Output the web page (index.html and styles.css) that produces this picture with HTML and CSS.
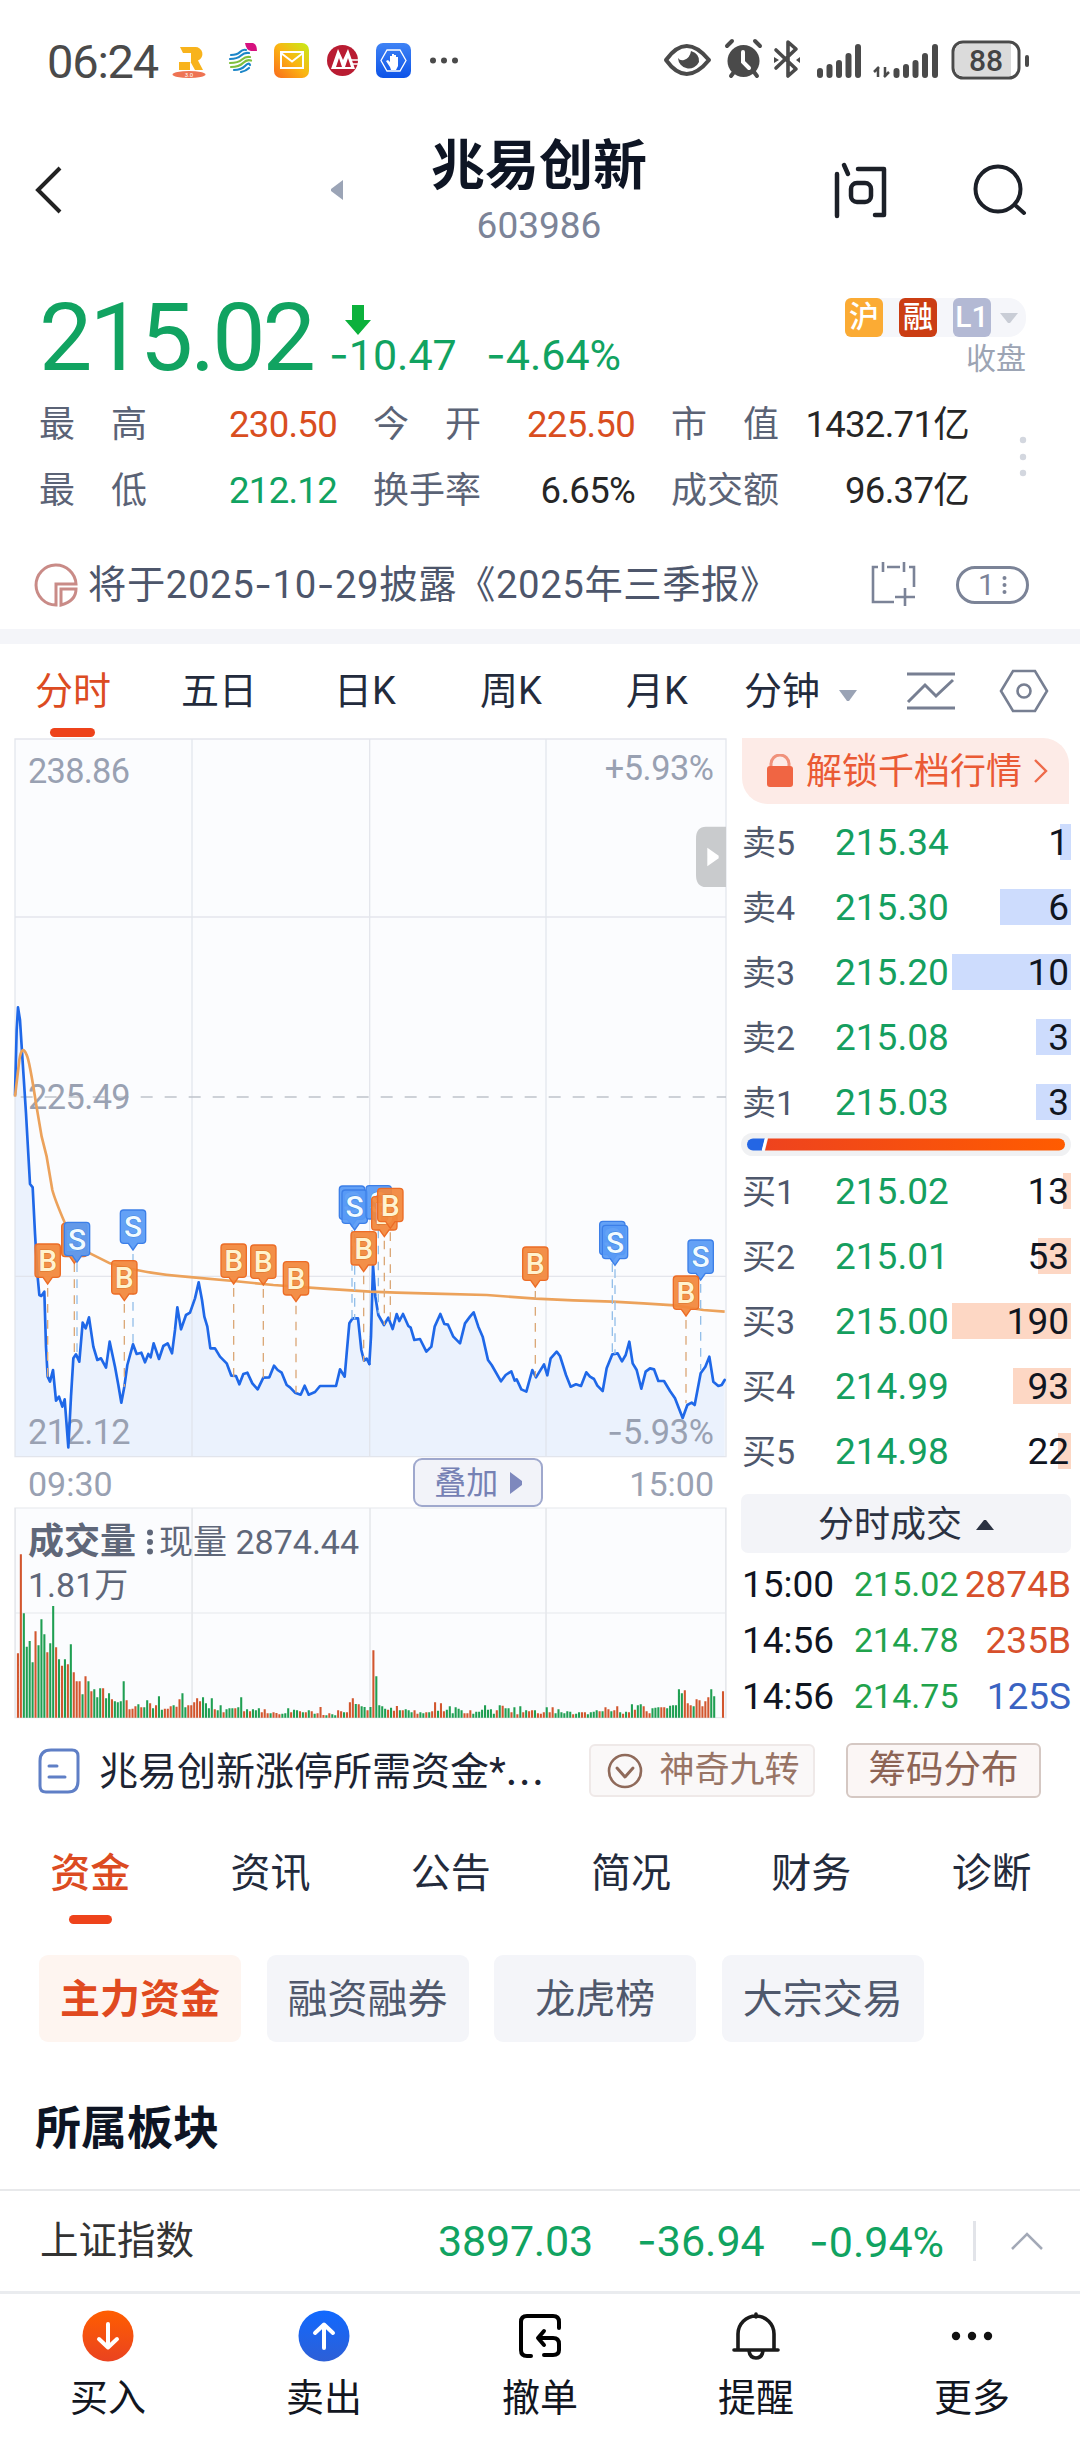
FILE: index.html
```html
<!DOCTYPE html>
<html lang="zh-CN">
<head>
<meta charset="utf-8">
<title>兆易创新 603986</title>
<link rel="stylesheet" href="styles.css">
</head>
<body>
<div class="statusbar">
  <span class="clock">06:24</span>
  <svg class="apps" width="290" height="40" viewBox="0 0 290 40">
    <defs>
      <linearGradient id="mail" x1="0" y1="1" x2="1" y2="0"><stop offset="0" stop-color="#f96a1c"/><stop offset=".5" stop-color="#fbb413"/><stop offset="1" stop-color="#c4ee18"/></linearGradient>
      <linearGradient id="hand" x1="0" y1="0" x2="0" y2="1"><stop offset="0" stop-color="#3f83f5"/><stop offset="1" stop-color="#0c53e8"/></linearGradient>
    </defs>
    <path d="M9 6h15a7 7 0 0 1 3 13.500l5 9.500h-8l-5-9v9h-7v-11h8v-6h-8z" fill="#f8b31c"/>
    <path d="M10 15h7v3h3v3h-12v-3h2z" fill="#fff"/><path d="M8 21h6v8h-6z" fill="#f8b31c"/>
    <ellipse cx="18" cy="33.500" rx="16.500" ry="3.500" fill="#ee7353"/>
    <text x="18" y="36" font-size="6" fill="#fff" text-anchor="middle">3.0</text>
    <g fill="none" stroke-width="2.200" stroke-linecap="round"><path d="M60 14q6 0 9-3t6-2M59 18q7 0 11-3.500t8-2.500" stroke="#1c86c8"/><path d="M59 22q8 0 12-3.500t8-2.500M60 26q8 0 12-4t8-2.500" stroke="#7fbf3d"/><path d="M63 29q7 0 11-4t5-1M70 31q5-1 8-4" stroke="#1c86c8"/></g>
    <path d="M74 2h8q4 1 4 8h-6q-5-1-6-8z" fill="#d6117f"/>
    <rect x="103" y="2" width="35" height="35" rx="7" fill="url(#mail)"/>
    <path d="M110 11h22v16h-22zM110 12l11 8.500l11-8.500" fill="none" stroke="#fff" stroke-width="2"/>
    <circle cx="171.500" cy="19.500" r="15.500" fill="#b91c32"/>
    <path d="M160 28l7-20l5 11l5-11l7 20z" fill="#fff"/><path d="M165 26l3-9l3 9zM174 26l3-9l3 9z" fill="#b91c32"/><path d="M179 19h8M181 23h6" stroke="#fff" stroke-width="1.500"/>
    <rect x="205" y="2" width="35" height="35" rx="7" fill="url(#hand)"/>
    <path d="M216 9h13l6 10.500l-6 10.500h-13l-6-10.500z" fill="none" stroke="#fff" stroke-width="1.300"/>
    <path d="M219 26l-4-6l2-1l2 2v-6h2v-2h2v1h2v2h2v9l-2 4h-5z" fill="#fff"/>
    <g fill="#4a4a4a"><circle cx="262" cy="19.500" r="3"/><circle cx="273" cy="19.500" r="3"/><circle cx="284" cy="19.500" r="3"/></g>
  </svg>
  <svg class="signals" width="370" height="46" viewBox="0 0 370 46">
    <g fill="none" stroke="#4a4a4a" stroke-width="4" stroke-linejoin="round" stroke-linecap="round">
      <path d="M3 23q20-28 43 0q-23 28-43 0z"/>
      <path d="M64 9l5-5M92 4l5 5M68 39l3-4M94 39l-3-4"/>
      <path d="M113 13l20 19l-8 7v-34l8 7l-20 19" stroke-width="3.600"/>
    </g>
    <path d="M28 14q9 3 8 11a11 11 0 0 1-21-4q2 3 6 2q6-2 7-9z" fill="#4a4a4a"/>
    <circle cx="80.500" cy="24" r="16" fill="#4a4a4a"/><path d="M80 15v10l6 6" stroke="#fff" stroke-width="4" fill="none" stroke-linecap="round"/>
    <path d="M111 20l5 3l-5 3zM137 20l-4 3l4 3z" fill="#4a4a4a"/>
    <g stroke="#4a4a4a" stroke-width="6" stroke-linecap="round"><path d="M157 34v4M166.500 30v8M176 26v12M185.500 19v19M195 10v28M233.500 34v4M243 30v8M252.500 26v12M262 19v19M272 10v28"/></g>
    <path d="M215 40v-10M216 30l-5 5M222 30v10M221 40l5-5" stroke="#4a4a4a" stroke-width="2.500" fill="none"/>
    <rect x="290" y="5" width="66" height="36" rx="10" fill="#fff" stroke="#4a4a4a" stroke-width="3"/>
    <path d="M300 7h48v32h-48q-8 0-8-8v-16q0-8 8-8z" fill="#dbdbdb"/>
    <path d="M364 20v8" stroke="#4a4a4a" stroke-width="4" stroke-linecap="round"/>
    <text x="323" y="33.500" font-size="30" text-anchor="middle" font-weight="500" fill="#444">88</text>
  </svg>
</div>

<header class="header">
  <svg class="back" width="30" height="50" viewBox="0 0 30 50"><path d="M26 3L4 25l22 22" fill="none" stroke="#222" stroke-width="4"/></svg>
  <svg class="prev" width="12" height="20" viewBox="0 0 12 20"><path d="M12 0v20L0 11v-2z" fill="#9ba4b6"/></svg>
  <div class="names"><h1>兆易创新</h1><span class="code">603986</span></div>
  <svg class="ask" width="56" height="60" viewBox="0 0 56 60"><g fill="none" stroke="#1c2028" stroke-width="4.500" stroke-linecap="round" stroke-linejoin="round"><path d="M5 14v42M12 5l4 9M26 9h26v46h-9"/><rect x="19" y="23" width="20" height="19" rx="6"/></g></svg>
  <svg class="search" width="56" height="54" viewBox="0 0 56 54"><g fill="none" stroke="#1c2028" stroke-width="4" stroke-linecap="round"><circle cx="25" cy="26" r="22.500"/><path d="M42 42l9 8"/></g></svg>
</header>

<section class="quote">
  <span class="price">215.02</span>
  <div class="change">
    <svg width="26" height="32" viewBox="0 0 26 32"><path d="M7 2h12v15h7L13 32L0 17h7z" fill="#0cb13c"/></svg>
    <div class="delta"><span class="d1"><i>-</i>10.47</span><span class="d2"><i>-</i>4.64%</span></div>
  </div>
  <div class="tags">
    <div class="taglist"><b class="hu">沪</b><b class="rong">融</b><b class="lv">L1</b><svg width="18" height="10" viewBox="0 0 18 10"><path d="M0 0h18L10 10H8z" fill="#c9cdd6"/></svg></div>
    <span class="closed">收盘</span>
  </div>
</section>

<section class="stats">
  <dl>
    <dt>最<s></s>高</dt><dd class="up">230.50</dd><dt>今<s></s>开</dt><dd class="up">225.50</dd><dt>市<s></s>值</dt><dd>1432.71亿</dd>
    <dt>最<s></s>低</dt><dd class="down">212.12</dd><dt>换手率</dt><dd>6.65%</dd><dt>成交额</dt><dd>96.37亿</dd>
  </dl>
  <svg width="8" height="44" viewBox="0 0 8 44"><g fill="#d3d7df"><circle cx="4" cy="5" r="3.200"/><circle cx="4" cy="22" r="3.200"/><circle cx="4" cy="38" r="3.200"/></g></svg>
</section>

<section class="notice">
  <svg width="44" height="46" viewBox="0 0 44 46"><g fill="none" stroke="#c98b87" stroke-width="3"><path d="M22 43A20 20 0 1 1 42 22H22z"/><path d="M27 27h15q0 12-15 16z"/></g></svg>
  <p>将于2025<i>-</i>10<i>-</i>29披露《2025年三季报》</p>
  <svg class="cal" width="46" height="48" viewBox="0 0 46 48"><g fill="none" stroke="#7b8397" stroke-width="2.600"><path d="M7 6H2v35h21M16 6h13M38 6h5v20M12 1v10M33 1v10M34 27v18M24 36h20"/></g></svg>
  <span class="count">1<svg width="5" height="22" viewBox="0 0 5 22"><g fill="#7b8397"><circle cx="2.500" cy="4" r="2"/><circle cx="2.500" cy="11" r="2"/><circle cx="2.500" cy="18" r="2"/></g></svg></span>
</section>

<nav class="periods">
  <span class="on">分时</span><span>五日</span><span>日K</span><span>周K</span><span>月K</span><span class="min">分钟<svg width="18" height="11" viewBox="0 0 18 11"><path d="M0 0h18L10 11H8z" fill="#9aa3b5"/></svg></span>
  <svg class="trend" width="50" height="40" viewBox="0 0 50 40"><path d="M1 3h48M1 37h48M2 31L19 14L30 25L47 9" fill="none" stroke="#777f92" stroke-width="3"/></svg>
  <svg class="hex" width="50" height="44" viewBox="0 0 50 44"><g fill="none" stroke="#777f92" stroke-width="2.600"><path d="M14 2h22l12 20l-12 20h-22L2 22z"/><circle cx="25" cy="22" r="6.500"/></g></svg>
</nav>

<main class="board">
  <div class="charts">
    <svg class="kline" width="740" height="720" viewBox="0 -726 2220 2160">
      <defs>
        <g id="mb"><path d="M-28 0h56q10 0 10 10v80q0 10-10 10h-14l-14 20l-14-20h-14q-10 0-10-10v-80q0-10 10-10z" fill="#f2863a" fill-opacity=".93" stroke="#ec6c26" stroke-width="4"/><text x="0" y="82" text-anchor="middle" font-size="90" font-weight="500" fill="#fff3cf" stroke="#d9742a" stroke-width="3" paint-order="stroke">B</text></g>
        <g id="ms"><path d="M-28 0h56q10 0 10 10v80q0 10-10 10h-14l-14 20l-14-20h-14q-10 0-10-10v-80q0-10 10-10z" fill="#579af5" fill-opacity=".93" stroke="#3c7fe8" stroke-width="4"/><text x="0" y="82" text-anchor="middle" font-size="90" font-weight="500" fill="#f2fbff" stroke="#3f86dd" stroke-width="3" paint-order="stroke">S</text></g>
      </defs>
      <path d="M45-723H2178V1430H45z" fill="#fbfcfe"/>
      <path d="M45 345L50 150L54 82L60 120L66 215L78 400L90 612L98 622L105 760L112 880L118 945L124 948L133 935L138 1100L143 1190L150 1205L159 1170L168 1262L177 1250L187 1280L194 1258L205 1402L213 1250L220 1135L228 1123L238 1145L248 1028L257 1045L267 1012L280 1100L292 1140L303 1135L318 1163L329 1085L345 1160L355 1215L364 1268L373 1220L382 1155L399 1093L410 1122L424 1118L435 1147L445 1122L452 1132L461 1090L477 1137L490 1098L503 1090L516 1120L525 1050L532 982L543 1048L558 1005L570 998L585 955L596 907L606 960L613 1010L622 1040L631 1105L645 1105L660 1130L680 1150L694 1187L708 1188L718 1213L730 1182L742 1178L757 1210L773 1228L790 1193L808 1192L822 1157L833 1170L845 1178L860 1215L870 1222L885 1238L902 1244L914 1217L926 1244L945 1236L960 1218L1008 1218L1020 1168L1034 1190L1040 1120L1048 1030L1058 1015L1074 1015L1084 1110L1092 1142L1100 1136L1108 1152V1430H45z" fill="#ebf2fd"/>
      <path transform="translate(1080 510)" d="M28 642L33 560L39 345L46 440L55 495L72 525L85 503L98 537L110 492L118 513L129 492L145 528L152 533L163 570L180 567L199 605L214 590L224 530L241 492L253 522L264 524L280 560L300 580L315 520L330 500L341 487L355 530L368 560L384 630L395 645L423 694L437 675L454 664L464 692L470 688L484 718L499 725L517 660L528 682L552 643L562 676L572 625L590 605L600 618L618 675L632 710L648 703L663 708L679 667L690 680L702 687L712 707L728 723L740 655L757 613L773 610L786 634L797 615L808 575L818 640L830 660L844 716L857 665L870 655L882 658L895 693L912 693L930 723L945 745L968 804L982 765L995 758L1004 765L1022 670L1036 650L1048 620L1060 695L1075 708L1085 705L1094 690V920H28z" fill="#ebf2fd"/>
      <path d="M45-723H2178V1430H45zM576-723V1430M1109-723V1430M1638-723V1430M45-189H2178M45 889H2178" fill="none" stroke="#dfe2e9" stroke-opacity=".85" stroke-width="4"/>
      <path d="M62 351H2178" stroke="#bfc2ca" stroke-width="5" stroke-dasharray="36 36"/>
      <g class="axis">
        <text x="84" y="-591" textLength="306">238.86</text><text x="84" y="387" textLength="308">225.49</text><text x="84" y="1391" textLength="308">212.12</text>
        <text x="1814" y="-600" textLength="328">+5.93%</text>
      </g>
      <g fill="none" stroke="#1f68e8" stroke-width="8" stroke-linejoin="round" stroke-linecap="round">
        <path d="M45 345L50 150L54 82L60 120L66 215L78 400L90 612L98 622L105 760L112 880L118 945L124 948L133 935L138 1100L143 1190L150 1205L159 1170L168 1262L177 1250L187 1280L194 1258L205 1402L213 1250L220 1135L228 1123L238 1145L248 1028L257 1045L267 1012L280 1100L292 1140L303 1135L318 1163L329 1085L345 1160L355 1215L364 1268L373 1220L382 1155L399 1093L410 1122L424 1118L435 1147L445 1122L452 1132L461 1090L477 1137L490 1098L503 1090L516 1120L525 1050L532 982L543 1048L558 1005L570 998L585 955L596 907L606 960L613 1010L622 1040L631 1105L645 1105L660 1130L680 1150L694 1187L708 1188L718 1213L730 1182L742 1178L757 1210L773 1228L790 1193L808 1192L822 1157L833 1170L845 1178L860 1215L870 1222L885 1238L902 1244L914 1217L926 1244L945 1236L960 1218L1008 1218L1020 1168L1034 1190L1040 1120L1048 1030L1058 1015L1074 1015L1084 1110L1092 1142L1100 1136L1108 1152"/>
        <path transform="translate(1080 510)" d="M28 642L33 560L39 345L46 440L55 495L72 525L85 503L98 537L110 492L118 513L129 492L145 528L152 533L163 570L180 567L199 605L214 590L224 530L241 492L253 522L264 524L280 560L300 580L315 520L330 500L341 487L355 530L368 560L384 630L395 645L423 694L437 675L454 664L464 692L470 688L484 718L499 725L517 660L528 682L552 643L562 676L572 625L590 605L600 618L618 675L632 710L648 703L663 708L679 667L690 680L702 687L712 707L728 723L740 655L757 613L773 610L786 634L797 615L808 575L818 640L830 660L844 716L857 665L870 655L882 658L895 693L912 693L930 723L945 745L968 804L982 765L995 758L1004 765L1022 670L1036 650L1048 620L1060 695L1075 708L1085 705L1094 690"/>
      </g>
      <path d="M45 350L58 240Q66 190 80 225Q88 240 108 370L125 470L140 530L157 630Q165 660 195 730Q215 795 270 820L330 850Q370 864 410 870Q480 885 580 892L700 903L820 915L960 925L1110 935L1190 938L1300 941L1460 945L1607 956L1720 961L1837 965L1930 970L2025 976L2110 990L2174 995" fill="none" stroke="#eca25b" stroke-width="8" stroke-linejoin="round"/>
      <g fill="none" stroke="#dba878" stroke-width="4" stroke-dasharray="26 22"><path d="M143 924V1190M223 850V1130M373 972V1220M701 924V1190M790 927V1195M888 977V1238M1091 887V1145M1153 782V1035M1171 757V1020M1606 933V1190M2058 1020V1270"/></g>
      <g fill="none" stroke="#94bfe9" stroke-width="4" stroke-dasharray="26 22"><path d="M231 850V1120M399 822V1093M1056 750V1018M1064 762V1018M1135 749V1000M1837 850V1120M1845 868V1122M2102 912V1170"/></g>
      <use href="#mb" x="143" y="792"/><use href="#mb" x="223" y="730"/><use href="#ms" x="231" y="727"/><use href="#mb" x="373" y="842"/><use href="#ms" x="399" y="690"/>
      <use href="#mb" x="701" y="792"/><use href="#mb" x="790" y="795"/><use href="#mb" x="888" y="845"/>
      <use href="#ms" x="1056" y="618"/><use href="#ms" x="1064" y="630"/><use href="#ms" x="1136" y="617"/><use href="#mb" x="1153" y="650"/><use href="#mb" x="1171" y="625"/><use href="#mb" x="1091" y="755"/>
      <use href="#mb" x="1606" y="801"/><use href="#ms" x="1837" y="724"/><use href="#ms" x="1845" y="736"/><use href="#ms" x="2102" y="780"/><use href="#mb" x="2058" y="888"/>
      <g class="axis"><text x="1822" y="1391" textLength="320"><tspan class="dash">-</tspan>5.93%</text></g>
      <path d="M2178-460H2118q-30 0-30 36v108q0 37 30 37h60z" fill="#c9cbcd"/><path d="M2122-397l34 24v8l-34 24z" fill="#fff"/>
    </svg>
    <div class="times"><span>09:30</span><span class="overlay">叠加<svg width="12" height="22" viewBox="0 0 12 22"><path d="M0 0L12 9v4L0 22z" fill="#7e88bd"/></svg></span><span>15:00</span></div>
    <div class="volume">
      <svg id="vol" width="740" height="212" viewBox="0 171 1568 636" preserveAspectRatio="none">
        <path d="M32 174H1538V803H32z" fill="#fbfcfe"/>
        <path d="M32 174H1538V803H32zM407 174V803M784 174V803M1157 174V803M32 489H1538" fill="none" stroke="#e6e8ec" stroke-width="3.500"/>
      </svg>
      <div class="vlabel"><b>成交量</b><svg width="6" height="26" viewBox="0 0 6 26"><g fill="#5f6779"><circle cx="3" cy="3.500" r="3"/><circle cx="3" cy="13" r="3"/><circle cx="3" cy="22.500" r="3"/></g></svg><span>现量 2874.44</span></div>
      <div class="vmax">1.81万</div>
    </div>
  </div>

  <aside class="book">
    <div class="unlock"><svg width="28" height="34" viewBox="0 0 28 34"><path d="M5 13v-3a9 9 0 0 1 18 0v3" fill="none" stroke="#f0927b" stroke-width="3"/><rect x="1" y="12" width="26" height="21" rx="3" fill="#f06543"/></svg><span>解锁千档行情</span><svg width="14" height="24" viewBox="0 0 14 24"><path d="M1 1l11 11L1 23" fill="none" stroke="#ee6a4a" stroke-width="2.400"/></svg></div>
    <ul class="sell">
      <li><span>卖5</span><em>215.34</em><q><u style="width:11px"></u>1</q></li>
      <li><span>卖4</span><em>215.30</em><q><u style="width:71px"></u>6</q></li>
      <li><span>卖3</span><em>215.20</em><q><u style="width:119px"></u>10</q></li>
      <li><span>卖2</span><em>215.08</em><q><u style="width:35px"></u>3</q></li>
      <li><span>卖1</span><em>215.03</em><q><u style="width:35px"></u>3</q></li>
    </ul>
    <svg class="ratio" width="330" height="23" viewBox="0 0 330 23"><defs><linearGradient id="buy"><stop offset="0" stop-color="#ee431e"/><stop offset="1" stop-color="#ff5c00"/></linearGradient></defs><rect width="330" height="23" rx="11.500" fill="#f0f1f3"/><path d="M12 5.500h12l-3 12h-9a6 6 0 0 1 0-12z" fill="#2466e4"/><path d="M27 5.500h291a6 6 0 0 1 0 12h-294z" fill="url(#buy)"/><path d="M25 5.500l-3 12" stroke="#fff" stroke-width="2.500"/></svg>
    <ul class="buy">
      <li><span>买1</span><em>215.02</em><q><u style="width:8px"></u>13</q></li>
      <li><span>买2</span><em>215.01</em><q><u style="width:33px"></u>53</q></li>
      <li><span>买3</span><em>215.00</em><q><u style="width:119px"></u>190</q></li>
      <li><span>买4</span><em>214.99</em><q><u style="width:58px"></u>93</q></li>
      <li><span>买5</span><em>214.98</em><q><u style="width:13px"></u>22</q></li>
    </ul>
    <div class="ticks-head">分时成交<svg width="18" height="10" viewBox="0 0 18 10"><path d="M0 10h18L10 0H8z" fill="#2b3242"/></svg></div>
    <ul class="ticks">
      <li><span>15:00</span><em>215.02</em><strong class="b">2874B</strong></li>
      <li><span>14:56</span><em>214.78</em><strong class="b">235B</strong></li>
      <li><span>14:56</span><em>214.75</em><strong class="s">125S</strong></li>
    </ul>
  </aside>
</main>

<section class="tools">
  <svg width="42" height="48" viewBox="0 0 42 48"><path d="M13 3h21q6 0 6 6v25q0 11-10 11H8q-6 0-6-6V14Q2 3 13 3z" fill="none" stroke="#5f7fc6" stroke-width="3"/><path d="M11 19h8M11 30h16" stroke="#5f7fc6" stroke-width="3" stroke-linecap="round"/></svg>
  <span class="headline">兆易创新涨停所需资金*<i>...</i></span>
  <span class="nine"><svg width="36" height="36" viewBox="0 0 36 36"><circle cx="18" cy="18" r="16" fill="none" stroke="#8f6a5a" stroke-width="2.600"/><path d="M10 15l8 9l8-9" fill="none" stroke="#8f6a5a" stroke-width="3" stroke-linecap="round" stroke-linejoin="round"/></svg>神奇九转</span>
  <span class="chip-dist">筹码分布</span>
</section>

<nav class="sections"><span class="on">资金</span><span>资讯</span><span>公告</span><span>简况</span><span>财务</span><span>诊断</span></nav>

<div class="filters"><span class="on">主力资金</span><span>融资融券</span><span>龙虎榜</span><span>大宗交易</span></div>

<h2 class="block-title">所属板块</h2>

<section class="index">
  <span class="iname">上证指数</span><span class="v1">3897.03</span><span class="v2"><i>-</i>36.94</span><span class="v3"><i>-</i>0.94%</span>
  <svg width="34" height="20" viewBox="0 0 34 20"><path d="M2 18L17 3L32 18" fill="none" stroke="#a3a9b7" stroke-width="2.500"/></svg>
</section>

<footer class="dock">
  <div><svg width="52" height="52" viewBox="0 0 52 52"><defs><linearGradient id="o" x2="0" y2="1"><stop offset="0" stop-color="#ff5e00"/><stop offset="1" stop-color="#ea4320"/></linearGradient></defs><circle cx="26" cy="26" r="25.500" fill="url(#o)"/><path d="M26 14v23M17 29l9 8.500l9-8.500" fill="none" stroke="#fff" stroke-width="4" stroke-linecap="round" stroke-linejoin="round"/></svg><span>买入</span></div>
  <div><svg width="52" height="52" viewBox="0 0 52 52"><defs><linearGradient id="p" x2="0" y2="1"><stop offset="0" stop-color="#1169ff"/><stop offset="1" stop-color="#2d5fd6"/></linearGradient></defs><circle cx="26" cy="26" r="25.500" fill="url(#p)"/><path d="M26 38V15M17 23l9-8.500l9 8.500" fill="none" stroke="#fff" stroke-width="4" stroke-linecap="round" stroke-linejoin="round"/></svg><span>卖出</span></div>
  <div><svg width="52" height="52" viewBox="0 0 52 52"><g fill="none" stroke="#000" stroke-width="4" stroke-linecap="round" stroke-linejoin="round"><path d="M45 18v-6q0-6-6-6H13q-6 0-6 6v28q0 6 6 6h4"/><path d="M30 21l-6 7l6 7M25 28h14q6 0 6 6v6q0 5-6 5h-9"/></g></svg><span>撤单</span></div>
  <div><svg width="52" height="52" viewBox="0 0 52 52"><path d="M8 39V24a18 18 0 0 1 36 0v15M4 40h44M26 4v3M19 41q1 7 7 7t7-7" fill="none" stroke="#1a1a1a" stroke-width="3.600" stroke-linecap="round"/></svg><span>提醒</span></div>
  <div><svg width="52" height="52" viewBox="0 0 52 52"><g fill="#111"><circle cx="10" cy="26" r="4.200"/><circle cx="26" cy="26" r="4.200"/><circle cx="42" cy="26" r="4.200"/></g></svg><span>更多</span></div>
</footer>
<script src="volume.js"></script>
</body>
</html>
```
FILE: styles.css
```css
* { box-sizing: border-box; margin: 0; padding: 0; }
body { width: 1080px; height: 2440px; overflow: hidden; background: #fff; color: #232b3c; font-family: Roboto, "Noto Sans CJK SC", sans-serif; font-size: 38px; line-height: 1; }
svg { display: block; flex: none; }
ul { list-style: none; }
i { font-family: Inter, sans-serif; font-style: normal; }
em, q { font-style: normal; }
q::before, q::after { content: none; }
span, p, b { white-space: nowrap; }

.statusbar { height: 122px; display: flex; align-items: center; padding: 0 33px 0 47px; }
.clock { font-size: 47px; letter-spacing: -1.2px; color: #4a4a4a; width: 124px; flex: none; }
.signals { margin-left: auto; margin-right: 14px; margin-top: -3px; }

.header { height: 136px; display: flex; align-items: center; padding: 0 51px 0 34px; }
.prev { margin-left: 267px; }
.names { width: 214px; margin-left: 89px; display: flex; flex-direction: column; align-items: center; gap: 17px; }
.names h1 { font-size: 54px; font-weight: 700; color: #0e1524; white-space: nowrap; line-height: 54px; margin-top: 1px; }
.code { font-size: 37px; line-height: 30px; color: #7c8498; }
.ask { margin-left: 186px; }
.search { margin-left: auto; }

.quote { height: 133px; display: flex; padding: 40px 54px 0 39px; color: #11a361; }
.price { font-size: 95px; letter-spacing: -3px; width: 292px; line-height: 80px; }
.change svg { margin: 5px 0 0 14px; }
.delta { display: flex; font-size: 43px; line-height: 43px; margin: -2px 0 0 -2px; }
.delta span { width: 157px; }
.tags { margin-left: auto; display: flex; flex-direction: column; align-items: flex-end; }
.taglist { display: flex; align-items: center; gap: 16px; height: 39px; background: #f5f6fa; border-radius: 6px 18px 18px 6px; padding-right: 8px; }
.taglist b { width: 38px; height: 39px; border-radius: 6px; color: #fff; font-size: 30px; line-height: 38px; text-align: center; font-weight: 500; }
.taglist svg { margin-left: -7px; }
.hu { background: #fbab34; }
.rong { background: #cb3d13; }
.lv { background: #b3b9d4; }
.closed { margin-top: 7px; font-size: 30px; line-height: 30px; color: #9ca4b4; }

.stats { height: 132px; display: flex; align-items: center; padding: 0 53px 0 39px; justify-content: space-between; }
.stats dl { display: grid; grid-template-columns: 108px 190px 36px 108px 154px 36px 108px 190px; grid-template-rows: 66px 66px; width: 930px; padding-top: 2px; }
.stats dl > :nth-child(6n+3) { grid-column: 4; }
.stats dl > :nth-child(6n+5) { grid-column: 7; }
.stats dt { font-size: 36px; color: #5b6376; line-height: 66px; display: flex; justify-content: space-between; }
.stats dd { font-size: 36.500px; letter-spacing: -.7px; color: #262626; line-height: 66px; text-align: right; white-space: nowrap; }
.stats dd.up { color: #d94e1f; }
.stats dd.down { color: #11a361; }

.notice { height: 106px; padding: 18px 51px 0 34px; display: flex; align-items: center; color: #4d566b; }
.notice p { margin-left: 10px; font-size: 38.300px; letter-spacing: .6px; }
.cal { margin-left: auto; }
.count { margin-left: 39px; width: 73px; height: 38px; border: 3px solid #7b8397; border-radius: 19px; font-size: 30px; display: flex; align-items: center; justify-content: center; gap: 7px; color: #7b8397; }

.periods { height: 109px; border-top: 15px solid #f4f5f9; display: flex; align-items: center; color: #232b3c; padding: 0 31px 0 35px; }
.periods span { position: relative; margin-right: 70px; font-size: 38px; width: 76px; text-align: center; }
.periods .min { display: flex; align-items: center; gap: 19px; width: auto; margin: 0 49px 0 -21px; }
.periods .min svg { margin-top: 9px; }
.periods .on { color: #dc4b22; }
.periods .on::after { content: ""; position: absolute; left: 15px; top: 56px; width: 45px; height: 9px; border-radius: 5px; background: #ee431b; }
.hex { margin-left: auto; }

.board { display: grid; grid-template-columns: 741px 330px; height: 980px; }
.axis { font-family: Roboto, sans-serif; font-size: 103px; fill: #99a1b2; }
.dash { font-family: Inter, sans-serif; }
.times { height: 49px; padding: 2px 27px 0 28px; display: flex; align-items: center; font-size: 34px; color: #99a1b2; width: 741px; }
.overlay { margin: -2px 86px 0 auto; width: 130px; height: 49px; border: 2px solid #9fa8cd; border-radius: 9px; background: #f2f3f9; color: #7681b4; font-size: 32px; display: flex; align-items: center; justify-content: center; gap: 12px; }
.volume { position: relative; height: 211px; }
.volume > svg { position: absolute; left: 0; top: 0; }
.vlabel, .vmax { position: relative; margin-left: 28px; color: #5f6779; display: flex; align-items: center; font-size: 34px; }
.vlabel { padding-top: 14px; height: 56px; gap: 11px; }
.vlabel span { margin-left: -5px; }
.vlabel b { font-size: 36px; }
.vmax { height: 44px; }

.unlock { width: 327px; height: 66px; margin-left: 1px; border-radius: 0 26px 0 26px; background: #fdebe7; color: #ea5a35; display: flex; align-items: center; padding-left: 24px; font-size: 36px; }
.unlock span { margin: 2px 12px 0 12px; }
.sell { margin-top: 5px; }
.sell li, .buy li { height: 65px; display: grid; grid-template-columns: 94px 1fr auto; align-items: center; }
.book li span { color: #4f586c; font-size: 34px; padding: 2px 0 0 1px; }
.book li em { font-size: 37px; color: #159f5f; padding-top: 2px; }
.book q { position: relative; height: 36px; line-height: 37px; width: 119px; text-align: right; padding-right: 2px; color: #10151f; font-size: 37px; }
.book u { position: absolute; right: 0; top: 0; height: 36px; background: #cddcfd; z-index: -1; }
.book .buy u { background: #fdd7c4; }
.ratio { margin: -1px 0 2px; }
.ticks-head { margin-top: 11px; height: 59px; padding-top: 2px; border-radius: 7px; background: #f3f4f8; display: flex; align-items: center; justify-content: center; gap: 14px; font-size: 36px; color: #2b3242; }
.ticks { margin-top: 3px; }
.ticks li { height: 56px; display: flex; align-items: center; font-size: 37px; }
.book .ticks span { font-size: 37px; color: #10151f; width: 113px; flex: none; padding-top: 0; }
.book .ticks em { font-size: 34px; color: #21a34c; padding-top: 0; }
.ticks strong { margin-left: auto; font-weight: 400; }
.ticks .b { color: #d7502c; }
.ticks .s { color: #3a63c2; }

.tools { height: 105px; display: flex; align-items: center; padding: 0 39px 0 38px; color: #1d2433; }
.headline { margin-left: 19px; padding-top: 1px; font-size: 39px; width: 490px; }
.headline i { letter-spacing: 2px; }
.nine { width: 226px; height: 53px; border: 2px solid #efe9e8; border-radius: 6px; background: #faf8f8; display: flex; align-items: center; justify-content: center; gap: 16px; font-size: 35px; color: #987465; padding-left: 3px; }
.chip-dist { margin-left: auto; width: 195px; height: 55px; border: 2px solid #d5c8c3; border-radius: 6px; background: #fbf6f5; color: #8d6455; display: flex; align-items: center; justify-content: center; font-size: 37.500px; padding-bottom: 1px; }

.sections { height: 102px; display: grid; grid-template-columns: repeat(6, 180.300px); align-items: center; text-align: center; font-size: 40px; }
.sections span { position: relative; }
.sections .on { color: #dc4b22; font-weight: 500; }
.sections .on::after { content: ""; position: absolute; left: 69px; top: 61px; width: 43px; height: 9px; border-radius: 5px; background: #ee431b; }

.filters { margin-top: 30px; display: flex; gap: 25.600px; padding-left: 39px; }
.filters span { width: 202px; height: 87px; padding-top: 2px; border-radius: 9px; background: #f4f5f9; color: #4f586c; font-size: 40px; display: flex; align-items: center; justify-content: center; }
.filters .on { background: #fef5f0; color: #e04a20; font-weight: 700; }

.block-title { height: 147px; padding: 25px 0 0 35px; line-height: 122px; font-size: 46px; font-weight: 700; color: #0e1524; }

.index { height: 102px; border-top: 2px solid #e8e9eb; display: flex; align-items: center; padding: 0 36px 0 40px; font-size: 43px; color: #11a361; }
.iname { font-size: 38.500px; color: #333; width: 398px; }
.v1 { width: 199px; letter-spacing: -.2px; }
.v2 { width: 172px; }
.v3 { width: 167px; height: 40px; border-right: 3px solid #e2e4e9; line-height: 40px; }
.index svg { margin-left: auto; }

.dock { height: 149px; border-top: 3px solid #eaecef; display: grid; grid-template-columns: repeat(5, 216px); justify-items: center; padding-top: 16px; }
.dock div { display: flex; flex-direction: column; align-items: center; gap: 17px; }
.dock span { font-size: 38px; color: #12161f; }
```
FILE: volume.js
```js
// Per-minute turnover: colour flag (r = up, g = down) followed by bar height.
const bars = `r193 r490 g313 g213 g230 g166 r259 g217 g295 g250 r196 g223 g335 r211 g175 r156 g175 r160 g220 r136
r109 r109 g70 r124 g109 r79 g85 g61 g88 r88 g58 g73 r55 g49 g46 g49 g109 r52 r25 r27
r34 g40 r31 g31 g52 r43 g28 r37 g64 g24 r27 r27 r34 g37 r33 r55 g73 g31 r37 r37
r46 r58 r49 g61 g43 g28 g58 r25 g22 g37 r16 g25 g28 g28 r28 g31 g61 r19 g25 r19
g25 g22 g28 r16 r25 r13 g13 r16 r14 r10 g12 g13 g28 r16 g24 g22 r19 g16 r16 g22
r19 g12 r13 r32 r8 g7 r13 g10 g7 r22 r19 g16 r16 r46 r58 g41 r40 g34 g32 r22
g32 r202 g124 g37 g34 g27 r24 g30 r21 r35 g22 r22 g25 g22 g16 r22 r12 g16 g13 r16
g16 r19 r46 g21 r43 r19 g24 g34 g13 g31 g27 g22 r13 r13 r22 g12 g18 g18 g24 g37
g24 g25 g12 r22 g37 r36 g28 g28 r16 g31 r10 g34 r16 g22 r19 r22 g22 r13 r12 r16
g31 r16 r31 g13 g25 g16 g13 g19 g18 r10 g12 g16 r16 r16 g10 g16 g18 g22 r19 g19
r31 r25 g19 r22 r34 g16 r12 g18 r16 g40 r24 g37 g40 r34 r19 r13 g28 g30 g31 r31
r31 g28 g36 g37 g37 g85 g73 r82 r43 r37 g34 r55 r52 r34 r49 r61 g85 g64 g0 g0 r79`.split(/\s+/);
const paths = { r: "", g: "" };
bars.forEach((bar, i) => {
  const x = (38 + i * 6.225).toFixed(1);
  if (+bar.slice(1)) paths[bar[0]] += `M${x} 803v-${bar.slice(1)}`;
});
const vol = document.getElementById("vol");
for (const [key, colour] of [["r", "#d2562e"], ["g", "#1f9f52"]]) {
  const p = document.createElementNS("http://www.w3.org/2000/svg", "path");
  p.setAttribute("d", paths[key]);
  p.setAttribute("stroke", colour);
  p.setAttribute("stroke-width", "4.4");
  vol.append(p);
}
```
